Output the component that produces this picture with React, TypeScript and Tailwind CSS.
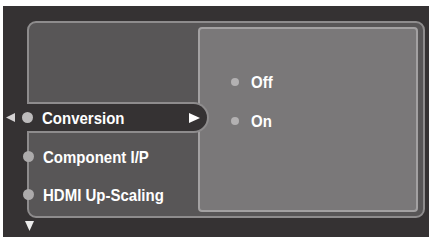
import React from "react";

const font = { fontFamily: '"Liberation Sans", Arial, sans-serif' };

function Bullet({ className }: { className: string }) {
  return <span className={"block shrink-0 rounded-full " + className} />;
}

function LeftTri({ className }: { className?: string }) {
  return (
    <svg width="9" height="9" viewBox="0 0 9 9" className={className}>
      <path d="M0 4.5 L9 0 L9 9 Z" fill="#d4d2d3" />
    </svg>
  );
}

function RightTri({ className }: { className?: string }) {
  return (
    <svg width="11" height="10" viewBox="0 0 11 10" className={className}>
      <path d="M0 0 L11 5 L0 10 Z" fill="#ffffff" />
    </svg>
  );
}

function DownTri({ className }: { className?: string }) {
  return (
    <svg width="9" height="10" viewBox="0 0 9 10" className={className}>
      <path d="M0 0 L9 0 L4.5 10 Z" fill="#ececec" />
    </svg>
  );
}

const label = "text-[15px] leading-none font-bold text-white scale-y-[1.15]";

export default function App() {
  return (
    <div className="w-[429px] h-[237px] bg-white pt-[6px] pl-[3px] overflow-hidden" style={font}>
      <div className="h-full bg-[#353233] pt-[15px] pl-[24px] pr-[4px] flex flex-col">
        <div className="h-[197px] shrink-0 rounded-[9px] border-2 border-[#8e8c8d] bg-[#585657] flex pr-[5px]">
          {/* left column */}
          <div className="w-[169px] shrink-0 flex flex-col">
            <div className="h-[79px] shrink-0" />
            <div className="relative z-10 ml-[-2px] w-[182px] h-[31px] shrink-0 bg-[#353233] border-y-2 border-r-2 border-[#8e8c8d] rounded-r-[16px] flex items-center">
              <LeftTri className="ml-[-21px] shrink-0" />
              <Bullet className="ml-[7px] w-[11px] h-[11px] bg-[#bdbbbc]" />
              <span className={"ml-[9px] " + label}>Conversion</span>
              <RightTri className="ml-auto mr-[7px] shrink-0" />
            </div>
            <div className="mt-[4px] h-[38px] flex items-center">
              <Bullet className="ml-[-6px] w-[11px] h-[11px] bg-[#acaaab]" />
              <span className={"ml-[9px] " + label}>Component I/P</span>
            </div>
            <div className="h-[38px] flex items-center">
              <Bullet className="ml-[-6px] w-[11px] h-[11px] bg-[#acaaab]" />
              <span className={"ml-[9px] " + label}>HDMI Up-Scaling</span>
            </div>
          </div>
          {/* right panel */}
          <div className="mt-[4px] h-[185px] w-[220px] shrink-0 rounded-[4px] border-2 border-[#a3a1a2] bg-[#7a7879] pt-[33px] pl-[31px] flex flex-col">
            <div className="h-[39px] flex items-center">
              <Bullet className="w-[8px] h-[8px] bg-[#b3b1b2]" />
              <span className={"ml-[12px] " + label}>Off</span>
            </div>
            <div className="h-[39px] flex items-center">
              <Bullet className="w-[8px] h-[8px] bg-[#b3b1b2]" />
              <span className={"ml-[12px] " + label}>On</span>
            </div>
          </div>
        </div>
        <DownTri className="mt-[3px] ml-[-2px]" />
      </div>
    </div>
  );
}
